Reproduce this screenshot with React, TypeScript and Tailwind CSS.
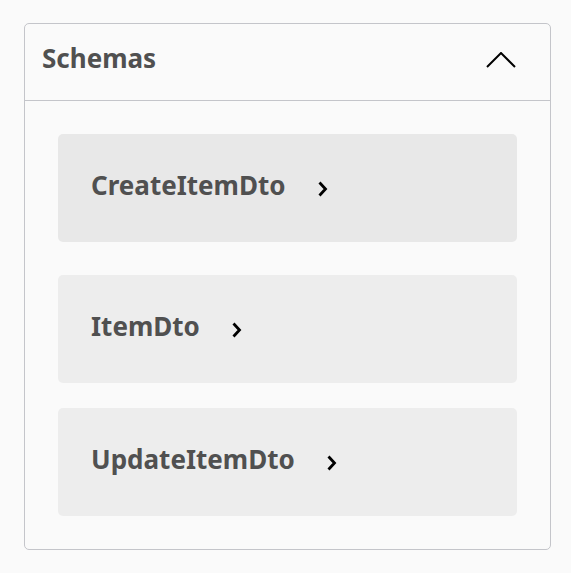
import React from "react";

const Chevron = () => (
  <svg width="12" height="18" viewBox="0 0 12 18" className="ml-[31px] mt-[1px]">
    <path d="M2.5 2.5 L8.5 9 L2.5 15.5" fill="none" stroke="#000" strokeWidth="2.8" />
  </svg>
);

const Card = ({ name, bg, mt }: { name: string; bg: string; mt: string }) => (
  <div className={`${bg} ${mt} h-[108px] rounded-[5px] flex items-center pl-[33px]`}>
    <span className="text-[26px] font-bold text-[#505050] leading-none mt-[-6px]">{name}</span>
    <Chevron />
  </div>
);

export default function App() {
  return (
    <div className="w-[571px] h-[573px] bg-[#fafafa] pt-[23px] pl-[24px]" style={{ fontFamily: '"Noto Sans", sans-serif' }}>
      <div className="w-[527px] h-[527px] border border-[#c4c5ca] rounded-[5px]">
        <div className="h-[77px] border-b border-[#c4c5ca] flex items-center justify-between pl-[17px] pr-[34px]">
          <span className="text-[26px] font-bold text-[#505050] leading-none mt-[-8px]">Schemas</span>
          <svg width="30" height="16" viewBox="0 0 30 16" className="mt-[-4px]">
            <path d="M1 15 L15 1 L29 15" fill="none" stroke="#000" strokeWidth="2" />
          </svg>
        </div>
        <div className="px-[33px] pt-[33px]">
          <Card name="CreateItemDto" bg="bg-[#e8e8e8]" mt="mt-0" />
          <Card name="ItemDto" bg="bg-[#ededed]" mt="mt-[33px]" />
          <Card name="UpdateItemDto" bg="bg-[#ededed]" mt="mt-[25px]" />
        </div>
      </div>
    </div>
  );
}
